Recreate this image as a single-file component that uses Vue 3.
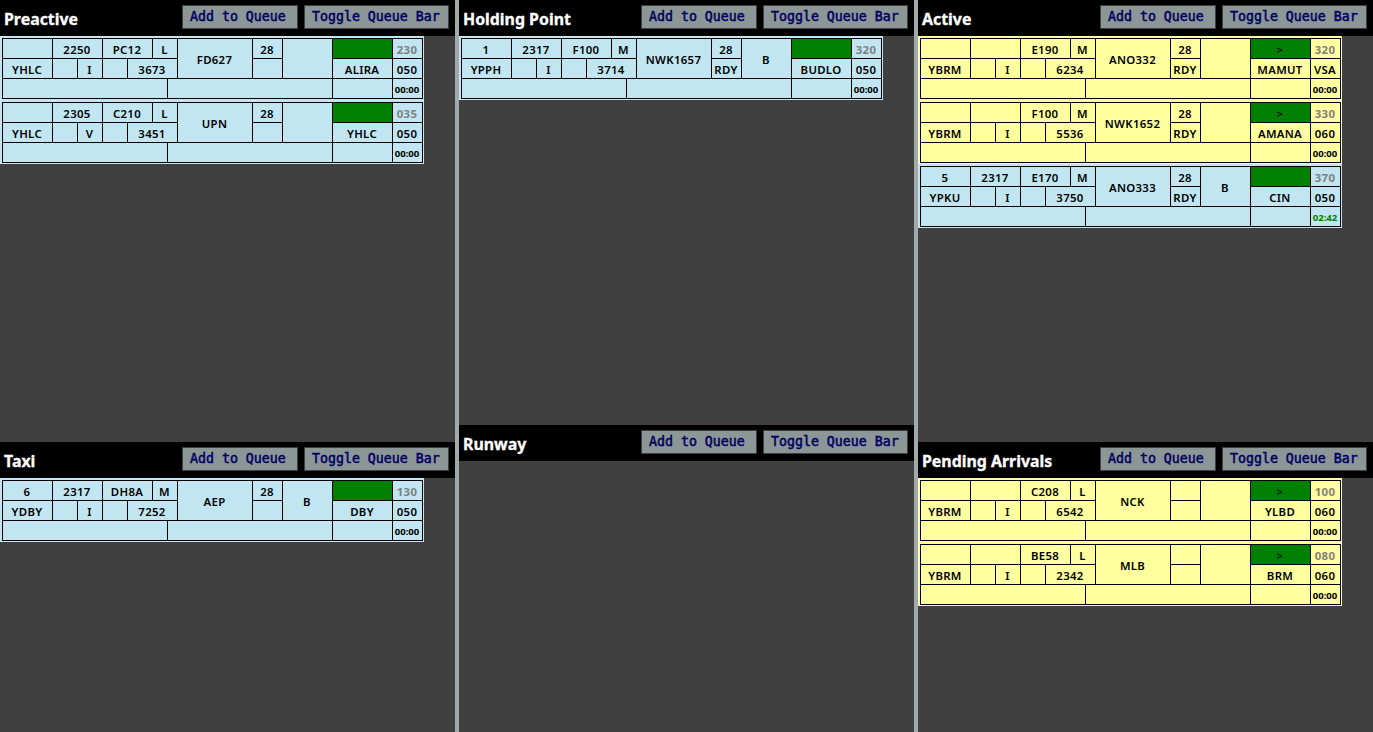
<script setup>
const B = 'blue'
const Y = 'yellow'
const strip = (tone, seq, time, type, wtc, call, rwy, rdy, dep, rules, code, bay, arrow, fix, lvl, cfl, clock = '00:00') =>
  ({ tone, seq, time, type, wtc, call, rwy, rdy, dep, rules, code, bay, arrow, fix, lvl, cfl, clock })

const columns = [
  [
    { title: 'Preactive', strips: [
      strip(B, '', '2250', 'PC12', 'L', 'FD627', '28', '', 'YHLC', 'I', '3673', '', '', 'ALIRA', '230', '050'),
      strip(B, '', '2305', 'C210', 'L', 'UPN', '28', '', 'YHLC', 'V', '3451', '', '', 'YHLC', '035', '050'),
    ] },
    { title: 'Taxi', strips: [
      strip(B, '6', '2317', 'DH8A', 'M', 'AEP', '28', '', 'YDBY', 'I', '7252', 'B', '', 'DBY', '130', '050'),
    ] },
  ],
  [
    { title: 'Holding Point', short: true, strips: [
      strip(B, '1', '2317', 'F100', 'M', 'NWK1657', '28', 'RDY', 'YPPH', 'I', '3714', 'B', '', 'BUDLO', '320', '050'),
    ] },
    { title: 'Runway', strips: [] },
  ],
  [
    { title: 'Active', strips: [
      strip(Y, '', '', 'E190', 'M', 'ANO332', '28', 'RDY', 'YBRM', 'I', '6234', '', '>', 'MAMUT', '320', 'VSA'),
      strip(Y, '', '', 'F100', 'M', 'NWK1652', '28', 'RDY', 'YBRM', 'I', '5536', '', '>', 'AMANA', '330', '060'),
      strip(B, '5', '2317', 'E170', 'M', 'ANO333', '28', 'RDY', 'YPKU', 'I', '3750', 'B', '', 'CIN', '370', '050', '02:42'),
    ] },
    { title: 'Pending Arrivals', strips: [
      strip(Y, '', '', 'C208', 'L', 'NCK', '', '', 'YBRM', 'I', '6542', '', '>', 'YLBD', '100', '060'),
      strip(Y, '', '', 'BE58', 'L', 'MLB', '', '', 'YBRM', 'I', '2342', '', '>', 'BRM', '080', '060'),
    ] },
  ],
]
</script>

<template>
  <main class="board">
    <section v-for="(bays, c) in columns" :key="c" class="column">
      <div v-for="bay in bays" :key="bay.title" class="bay" :class="{ short: bay.short }">
        <header class="head">
          <h2 class="title">{{ bay.title }}</h2>
          <button class="btn add">Add to Queue</button>
          <button class="btn toggle">Toggle Queue Bar</button>
        </header>
        <article v-for="s in bay.strips" :key="s.call" class="strip" :class="s.tone">
          <div class="main">
            <div class="left">
              <span class="cell w50">{{ s.seq }}</span>
              <span class="cell w50">{{ s.time }}</span>
              <span class="cell w50">{{ s.type }}</span>
              <span class="cell w25">{{ s.wtc }}</span>
              <span class="cell w50">{{ s.dep }}</span>
              <span class="cell w25"></span>
              <span class="cell w25">{{ s.rules }}</span>
              <span class="cell w25"></span>
              <span class="cell w50">{{ s.code }}</span>
            </div>
            <span class="cell tall w75">{{ s.call }}</span>
            <div class="stack w30">
              <span class="cell">{{ s.rwy }}</span>
              <span class="cell">{{ s.rdy }}</span>
            </div>
            <span class="cell tall w50">{{ s.bay }}</span>
            <div class="stack w60">
              <span class="cell green">{{ s.arrow }}</span>
              <span class="cell">{{ s.fix }}</span>
            </div>
            <div class="stack w30">
              <span class="cell level">{{ s.lvl }}</span>
              <span class="cell">{{ s.cfl }}</span>
            </div>
          </div>
          <div class="notes">
            <span class="cell w165"></span>
            <span class="cell w165"></span>
            <span class="cell w60"></span>
            <span class="cell w30 clock" :class="{ running: s.clock !== '00:00' }">{{ s.clock }}</span>
          </div>
        </article>
      </div>
    </section>
  </main>
</template>

<style>
html, body { margin: 0; background: #404040; overflow: hidden; }
</style>

<style scoped>
.board {
  display: flex;
  gap: 4px;
  width: 1373px;
  height: 732px;
  background: #a0aaaa;
  font-family: "Noto Sans", "Open Sans", sans-serif;
}
.column { width: 455px; display: flex; flex-direction: column; background: #404040; }
.bay { flex: 1; }
.bay:first-child { flex: none; height: 442px; }
.bay.short:first-child { height: 425px; }
.head {
  display: flex;
  align-items: flex-start;
  box-sizing: border-box;
  height: 36px;
  padding: 5px 6px 0 4px;
  background: #000;
}
.title {
  flex: 1;
  margin: 3px 0 0;
  color: #fff;
  font-size: 15.9px;
  font-weight: 700;
  -webkit-text-stroke: 0.3px #fff;
  line-height: 22px;
  white-space: nowrap;
}
.btn {
  box-sizing: border-box;
  height: 24px;
  margin: 0;
  padding: 0 0 0 7px;
  border: 1px solid #3c4040;
  border-radius: 0;
  background: #8c9696;
  color: #000060;
  font: 400 13.25px/22px "DejaVu Sans Mono", monospace;
  -webkit-text-stroke: 0.5px #000060;
  text-align: left;
  white-space: nowrap;
}
.add { width: 116px; margin-right: 6px; }
.toggle { width: 145px; }
.strip {
  box-sizing: border-box;
  width: 424px;
  height: 64px;
  padding: 2px 1px 1px 2px;
  color: #000;
}
.blue { background: #c1e6f2; }
.yellow { background: #ffffa0; }
.main, .notes { display: flex; box-sizing: border-box; width: 421px; border-left: 1px solid #000; }
.main { border-top: 1px solid #000; }
.left { display: flex; flex: none; flex-wrap: wrap; width: 175px; }
.stack { display: flex; flex: none; flex-direction: column; }
.cell {
  flex: none;
  box-sizing: border-box;
  height: 20px;
  padding-right: 1px;
  border-right: 1px solid #000;
  border-bottom: 1px solid #000;
  font-size: 11.4px;
  font-weight: 600;
  line-height: 21px;
  letter-spacing: 0.3px;
  text-align: center;
  white-space: nowrap;
}
.tall { height: 40px; line-height: 41px; }
.w25 { width: 25px; }
.w30 { width: 30px; }
.w50 { width: 50px; }
.w60 { width: 60px; }
.w75 { width: 75px; }
.w165 { width: 165px; }
.green { background: #008000; }
.level { color: #808080; font-weight: 700; }
.clock { font-size: 9.6px; font-weight: 700; letter-spacing: 0; }
.running { color: #008000; }
</style>
